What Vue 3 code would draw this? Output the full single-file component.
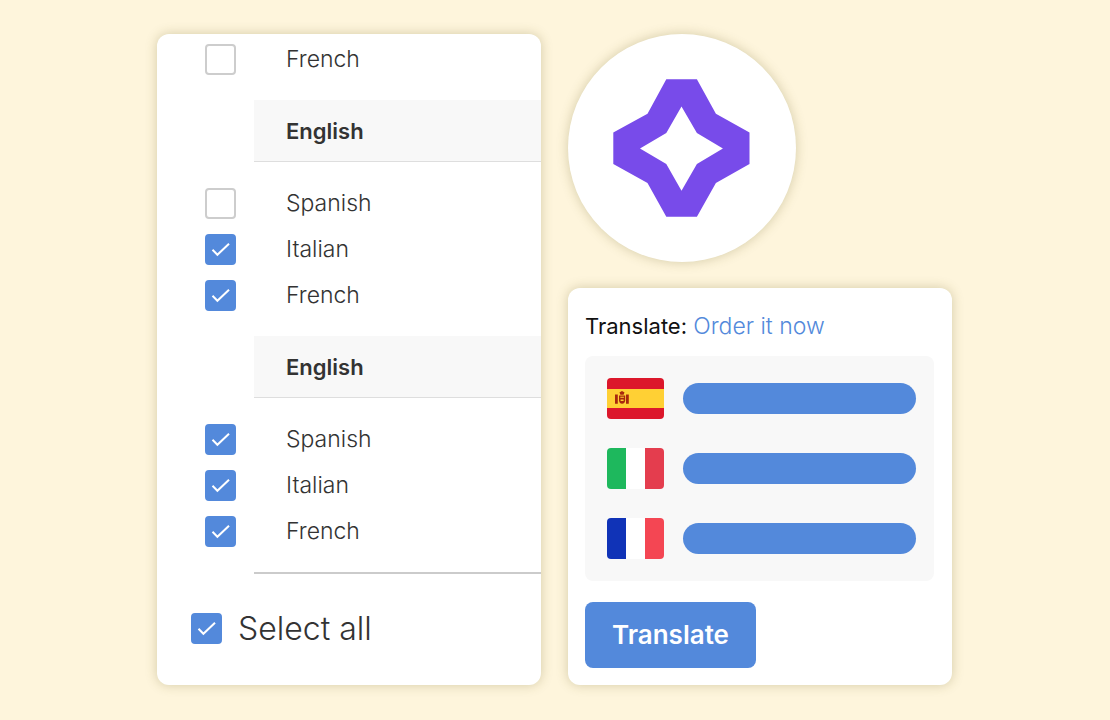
<template>
  <main class="page">
    <section class="card languages">
      <div v-for="(group, g) in groups" :key="g" class="group">
        <h2 v-if="group.title" class="group-title">{{ group.title }}</h2>
        <ul class="group-list">
          <li v-for="(item, i) in group.items" :key="i" class="row">
            <span class="check">
              <input :id="`lang-${g}-${i}`" v-model="item.checked" type="checkbox">
              <svg viewBox="0 0 31 31" aria-hidden="true"><path d="M7.5 15.8 12.4 20.8 24 9.8" /></svg>
            </span>
            <label :for="`lang-${g}-${i}`">{{ item.name }}</label>
          </li>
        </ul>
      </div>
      <div class="select-all">
        <span class="check">
          <input id="select-all" v-model="allChecked" type="checkbox" @change="toggleAll">
          <svg viewBox="0 0 31 31" aria-hidden="true"><path d="M7.5 15.8 12.4 20.8 24 9.8" /></svg>
        </span>
        <label for="select-all">Select all</label>
      </div>
    </section>

    <div class="side">
      <div class="logo">
        <svg viewBox="0 0 228 228" role="img" aria-label="Logo">
          <path
            fill="#784bea"
            fill-rule="evenodd"
            d="M98.3 45.3h30.6l19 34.4 33.6 18.8v31.4l-33.6 19-19 33.8H98.3l-18.8-33.8-34.2-19V98.5l34.2-18.8zM113.5 72.5 98.3 99 72 114.5l26.3 15.4 15.2 26.8 15.4-26.8 26-15.4-26-15.5z"
          />
        </svg>
      </div>

      <section class="card order">
        <p class="order-title">Translate: <a href="#">Order it now</a></p>
        <ul class="order-list">
          <li v-for="country in countries" :key="country" class="order-row">
            <svg v-if="country === 'Spain'" class="flag" viewBox="0 0 57 41" role="img" :aria-label="country">
              <path fill="#dc172b" d="M0 0h57v41H0z" />
              <path fill="#ffd034" d="M0 11h57v19H0z" />
              <g fill="#a8280e">
                <path d="M8 16.5h2.8v9.2H8zM19 16.5h2.8v9.2H19z" />
                <path d="M12.8 15.3q-.8-1.2.5-1.3l.8-.4.9-.7.9.7.8.4q1.3.1.5 1.3l-.6 1.4h-3.2z" />
                <path fill-rule="evenodd" d="M12 17.5h6.2v5q-.5 3.3-3.1 3.3T12 22.5zM13.3 18.7v1h3.6v-1zM13.6 21.5v1.4h3v-1.4z" />
              </g>
            </svg>
            <svg v-else-if="country === 'Italy'" class="flag" viewBox="0 0 57 41" role="img" :aria-label="country">
              <path fill="#fff" d="M0 0h57v41H0z" />
              <path fill="#1eb85d" d="M0 0h19v41H0z" />
              <path fill="#e43d4e" d="M38 0h19v41H38z" />
            </svg>
            <svg v-else class="flag" viewBox="0 0 57 41" role="img" :aria-label="country">
              <path fill="#fff" d="M0 0h57v41H0z" />
              <path fill="#1033b7" d="M0 0h19v41H0z" />
              <path fill="#f44653" d="M38 0h19v41H38z" />
            </svg>
            <span class="bar"></span>
          </li>
        </ul>
        <button type="button" class="translate">Translate</button>
      </section>
    </div>
  </main>
</template>

<script setup>
import { ref } from 'vue'

const groups = ref([
  { title: '', items: [{ name: 'French', checked: false }] },
  {
    title: 'English',
    items: [
      { name: 'Spanish', checked: false },
      { name: 'Italian', checked: true },
      { name: 'French', checked: true },
    ],
  },
  {
    title: 'English',
    items: [
      { name: 'Spanish', checked: true },
      { name: 'Italian', checked: true },
      { name: 'French', checked: true },
    ],
  },
])
const allChecked = ref(true)
const countries = ['Spain', 'Italy', 'France']

function toggleAll() {
  groups.value.forEach((group) => {
    group.items.forEach((item) => {
      item.checked = allChecked.value
    })
  })
}
</script>

<style>
body {
  background: #fef5dc;
}
</style>

<style scoped>
.page {
  --blue: #5389db;
  display: grid;
  grid-template-columns: 1fr 1fr;
  gap: 27px;
  padding: 34px 158px 34px 157px;
  font-family: Inter, "Liberation Sans", sans-serif;
  font-size: 22px;
  line-height: 30px;
  color: #333;
}
.card {
  background: #fff;
  border-radius: 12px;
  box-shadow: 0 0 12px rgba(100, 95, 30, 0.28);
}
.languages {
  padding-top: 2px;
}
.group-title {
  margin: 0 0 18px 97px;
  padding: 16px 32px 15px;
  border-bottom: 1px solid #dedede;
  background: #f8f8f8;
  font-size: 22px;
  font-weight: 600;
}
.group-list {
  margin: 0;
  padding: 0 0 18px;
  list-style: none;
}
.row {
  display: flex;
  align-items: center;
  gap: 50px;
  height: 46px;
  padding-left: 48px;
  font-size: 23px;
  font-weight: 300;
}
.check {
  display: grid;
  flex: none;
  width: 31px;
  height: 31px;
}
.check input,
.check svg {
  grid-area: 1 / 1;
  width: 100%;
  height: 100%;
}
.check input {
  appearance: none;
  box-sizing: border-box;
  margin: 0;
  border: 2px solid #cdcdcd;
  border-radius: 4px;
  background: #fff;
}
.check input:checked {
  border-color: var(--blue);
  background: var(--blue);
}
.check svg {
  fill: none;
  stroke: #fff;
  stroke-width: 2;
  pointer-events: none;
}
.check input:not(:checked) + svg {
  visibility: hidden;
}
.select-all {
  display: flex;
  align-items: center;
  gap: 16px;
  height: 113px;
  padding-left: 34px;
  position: relative;
  font-size: 32px;
  font-weight: 300;
}
.select-all::before {
  content: "";
  position: absolute;
  top: 0;
  left: 97px;
  right: 0;
  height: 2px;
  background: #cbcbcb;
}
.side {
  display: flex;
  flex-direction: column;
  gap: 26px;
}
.logo {
  width: 228px;
  height: 228px;
  border-radius: 50%;
  background: #fff;
  box-shadow: 0 0 12px rgba(100, 95, 30, 0.28);
}
.logo svg {
  display: block;
}
.order {
  padding: 23px 18px 17px 17px;
}
.order-title {
  margin: 0 0 15px;
  color: #111;
}
.order-title a {
  color: var(--blue);
  font-size: 23px;
  font-weight: 300;
  text-decoration: none;
}
.order-list {
  display: flex;
  flex-direction: column;
  gap: 29px;
  margin: 0 0 21px;
  padding: 22px 18px 22px 22px;
  border-radius: 8px;
  background: #f8f8f8;
  list-style: none;
}
.order-row {
  display: flex;
  align-items: center;
  gap: 19px;
}
.flag {
  flex: none;
  width: 57px;
  height: 41px;
  border-radius: 4px;
}
.bar {
  flex: 1;
  height: 31px;
  border-radius: 16px;
  background: var(--blue);
}
.translate {
  display: block;
  padding: 18px 27px;
  border: 0;
  border-radius: 8px;
  background: var(--blue);
  color: #fff;
  font: inherit;
  font-size: 26px;
  font-weight: 600;
}
</style>
